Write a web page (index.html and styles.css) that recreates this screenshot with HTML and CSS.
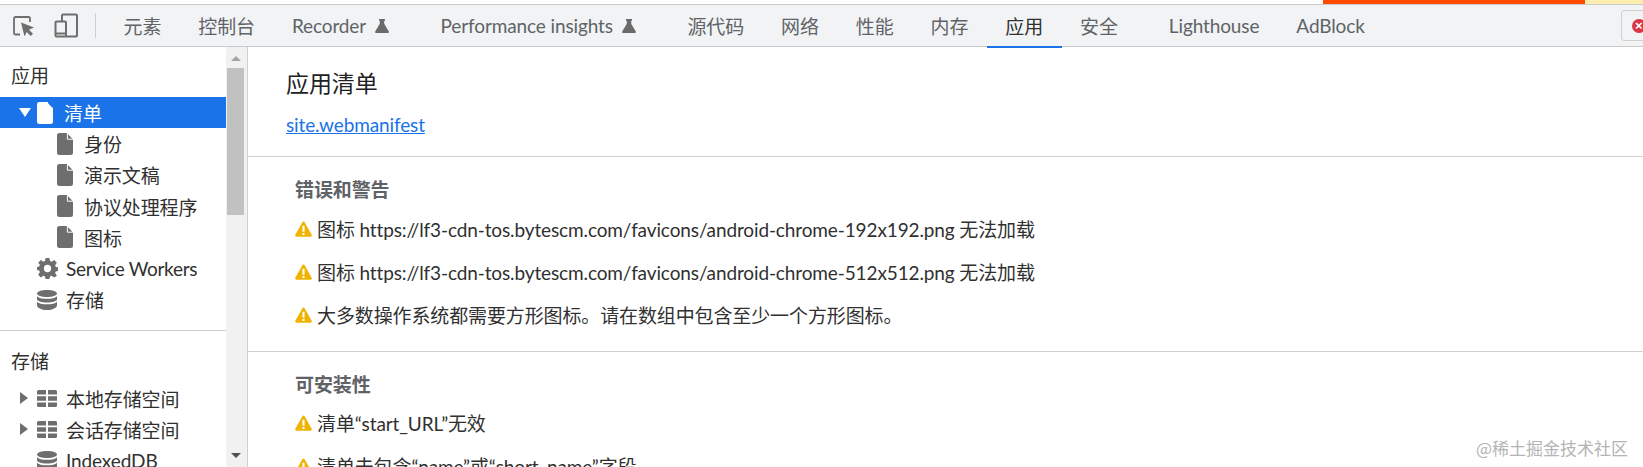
FILE: index.html
```html
<!DOCTYPE html>
<html lang="zh-CN">
<head>
<meta charset="utf-8">
<title>DevTools</title>
<link rel="stylesheet" href="styles.css">
</head>
<body>
<svg class="defs" width="0" height="0" aria-hidden="true">
  <symbol id="flask" viewBox="0 0 16 16"><path d="M5 1h6v1.800h-.8v3L14.800 13.600c.4.800 0 1.400-.8 1.400H2c-.8 0-1.200-.6-.8-1.400L5.800 5.800v-3H5z" fill="currentColor"/></symbol>
  <symbol id="doc" viewBox="0 0 16 22"><path d="M2.500 0H10l6 6.500V19.500a2.500 2.500 0 0 1-2.500 2.500h-11A2.500 2.500 0 0 1 0 19.500v-17A2.500 2.500 0 0 1 2.500 0z" fill="currentColor"/><path d="M10.400 0v6.200h5.600" fill="none" stroke="#fff" stroke-width="1"/></symbol>
  <symbol id="warn" viewBox="0 0 16 15"><path d="M8 .5c.5 0 .9.300 1.200.8l6.500 11.500c.5.900-.1 2-1.100 2H1.400c-1 0-1.600-1.100-1.100-2L6.800 1.300C7.100.8 7.500.5 8 .5z" fill="#f0b400"/><path d="M7 4.500h2v5.500H7zM7 11.200h2v2H7z" fill="#fff"/></symbol>
  <symbol id="db" viewBox="0 0 20 20"><g fill="currentColor"><path d="M0 3.500C0 1.600 4.500 0 10 0s10 1.600 10 3.500S15.500 7 10 7 0 5.400 0 3.500z"/><path d="M0 6c1 2 5.500 2.800 10 2.800S19 8 20 6v3.200C20 11 15.500 12.500 10 12.500S0 11 0 9.200z"/><path d="M0 11.500c1 2 5.500 2.800 10 2.800s9-.8 10-2.800v3.700C20 17.800 15.500 20 10 20S0 17.800 0 15.200z"/></g></symbol>
  <symbol id="grid" viewBox="0 0 20 17"><g fill="currentColor"><path d="M1.500 0H9v4.500H0V1.500A1.500 1.500 0 0 1 1.500 0zM11 0h7.500A1.500 1.500 0 0 1 20 1.500v3h-9zM0 6.200h9v4.600H0zM11 6.200h9v4.600h-9zM0 12.500h9V17H1.500A1.500 1.500 0 0 1 0 15.500zM11 12.500h9v3a1.500 1.500 0 0 1-1.500 1.500H11z"/></g></symbol>
  <symbol id="gear" viewBox="0 0 22 22"><path fill="currentColor" fill-rule="evenodd" d="M9 0h4l.6 3.200 1.700.7L18 2.100 20.800 5l-1.800 2.600.7 1.700L22 9.700v3.900l-2.300.5-.7 1.700 1.800 2.700L18 20.400l-2.700-1.800-1.700.7L13 22H9l-.6-2.700-1.700-.7L4 20.400 1.200 17.500 3 14.800l-.7-1.700L0 12.600V9.300l2.300-.4.7-1.700L1.200 5 4 2.100l2.700 1.800 1.700-.7zM11 7.200a3.800 3.800 0 1 0 0 7.600 3.800 3.800 0 0 0 0-7.600z"/></symbol>
</svg>

<div class="page-top">
  <div class="top-light"></div>
  <div class="top-orange"></div>
  <div class="top-yellow"></div>
</div>

<header class="toolbar">
  <div class="tool-icons">
    <svg class="ico-inspect" viewBox="0 0 21 20"><path d="M7 18.500H2.500a1.500 1.500 0 0 1-1.500-1.500V2.500A1.500 1.500 0 0 1 2.500 1h13A1.500 1.500 0 0 1 17 2.500V6" fill="none" stroke="#6e6e6e" stroke-width="1.800"/><path d="M8 6.500l13 5-5 2.200 4 4-2.300 2.300-4-4-2.200 4.500z" fill="#6e6e6e"/></svg>
    <svg class="ico-device" viewBox="0 0 24 25"><path d="M8 8V2.500a1 1 0 0 1 1-1h13a1 1 0 0 1 1 1v20a1 1 0 0 1-1 1H2.500a1 1 0 0 1-1-1v-13a1 1 0 0 1 1-1H11a1 1 0 0 1 1 1v14" fill="none" stroke="#6e6e6e" stroke-width="2"/><path d="M2 20.500h10" stroke="#6e6e6e" stroke-width="2"/></svg>
    <span class="tool-sep"></span>
  </div>
  <nav class="tabs">
    <a class="tab">元素</a>
    <a class="tab">控制台</a>
    <a class="tab">Recorder<svg class="flask"><use href="#flask"/></svg></a>
    <a class="tab">Performance insights<svg class="flask"><use href="#flask"/></svg></a>
    <a class="tab">源代码</a>
    <a class="tab">网络</a>
    <a class="tab">性能</a>
    <a class="tab">内存</a>
    <a class="tab active">应用</a>
    <a class="tab">安全</a>
    <a class="tab t-lh">Lighthouse</a>
    <a class="tab">AdBlock</a>
  </nav>
  <div class="err-badge"><span class="err-dot">×</span></div>
</header>

<div class="body">
  <aside class="sidebar">
    <div class="side-inner">
      <div class="side-head">应用</div>
      <div class="row selected l1"><span class="tri down"></span><svg class="doc"><use href="#doc"/></svg><span>清单</span></div>
      <div class="row l2"><svg class="doc"><use href="#doc"/></svg><span>身份</span></div>
      <div class="row l2"><svg class="doc"><use href="#doc"/></svg><span>演示文稿</span></div>
      <div class="row l2"><svg class="doc"><use href="#doc"/></svg><span>协议处理程序</span></div>
      <div class="row l2"><svg class="doc"><use href="#doc"/></svg><span>图标</span></div>
      <div class="row l1"><svg class="side-ico"><use href="#gear"/></svg><span class="latin-tight">Service Workers</span></div>
      <div class="row l1"><svg class="side-ico db"><use href="#db"/></svg><span>存储</span></div>
      <div class="side-div"></div>
      <div class="side-head">存储</div>
      <div class="row l1"><span class="tri right"></span><svg class="side-ico grid"><use href="#grid"/></svg><span>本地存储空间</span></div>
      <div class="row l1"><span class="tri right"></span><svg class="side-ico grid"><use href="#grid"/></svg><span>会话存储空间</span></div>
      <div class="row l1"><svg class="side-ico db"><use href="#db"/></svg><span>IndexedDB</span></div>
    </div>
    <div class="scrollbar">
      <span class="sb-up"></span>
      <span class="sb-thumb"></span>
      <span class="sb-down"></span>
    </div>
  </aside>
  <main class="content">
    <section class="head">
      <h1>应用清单</h1>
      <a class="link">site.webmanifest</a>
    </section>
    <section class="sec errors">
      <h2>错误和警告</h2>
      <p class="msg"><svg class="warn"><use href="#warn"/></svg>图标 https://lf3-cdn-tos.bytescm.com/favicons/android-chrome-192x192.png 无法加载</p>
      <p class="msg"><svg class="warn"><use href="#warn"/></svg>图标 https://lf3-cdn-tos.bytescm.com/favicons/android-chrome-512x512.png 无法加载</p>
      <p class="msg"><svg class="warn"><use href="#warn"/></svg>大多数操作系统都需要方形图标。请在数组中包含至少一个方形图标。</p>
    </section>
    <section class="sec install">
      <h2>可安装性</h2>
      <p class="msg"><svg class="warn"><use href="#warn"/></svg>清单“start_URL”无效</p>
      <p class="msg"><svg class="warn"><use href="#warn"/></svg>清单未包含“name”或“short_name”字段</p>
    </section>
  </main>
</div>
<div class="watermark">@稀土掘金技术社区</div>
</body>
</html>
```
FILE: styles.css
```css
* { box-sizing: border-box; }
html, body { margin: 0; padding: 0; height: 467px; overflow: hidden; background: #fff; }
body {
  width: 1643px;
  position: relative;
  font-family: Lato, "Noto Sans CJK SC", sans-serif;
  font-size: 19px;
  letter-spacing: -0.12px;
  color: #303030;
  display: flex;
  flex-direction: column;
}
.defs { position: absolute; }
.page-top { height: 4px; display: flex; background: #fff; flex: none; }
.top-light { width: 1323px; }
.top-orange { width: 262px; background: #ff4a00; }
.top-yellow { flex: 1; background: #fdeeb0; }

.toolbar {
  height: 43px;
  flex: none;
  display: flex;
  align-items: stretch;
  background: #f1f3f4;
  border-top: 1px solid #c9c9c9;
  border-bottom: 1px solid #c9c9c9;
  position: relative;
}
.tool-icons { width: 105px; display: flex; align-items: center; flex: none; padding-left: 13px; }
.ico-inspect { width: 21px; height: 20px; }
.ico-device { width: 24px; height: 25px; margin-left: 20px; }
.tool-sep { width: 1px; height: 25px; background: #d0d0d0; margin-left: 17px; }
.tabs { display: flex; flex: 1; align-items: stretch; }
.tab {
  display: flex;
  align-items: center;
  color: #5f6368;
  padding: 0 18.5px;
  white-space: nowrap;
  position: relative;
  flex: none;
}
.flask { width: 16px; height: 16px; margin: 0 13.5px 0 8px; color: #6a6a6a; }
.t-lh { margin-left: 14px; }
.tab.active { color: #303030; }
.tab.active::after {
  content: "";
  position: absolute;
  left: 0; right: 0; bottom: -2px;
  height: 2px;
  background: #1a73e8;
}
.err-badge {
  position: absolute;
  left: 1621px;
  top: 5px;
  width: 30px;
  height: 31px;
  border: 1px solid #d0d0d0;
  border-radius: 3px;
  padding: 8px 0 0 10px;
}
.err-dot {
  display: block;
  width: 14px;
  height: 14px;
  border-radius: 50%;
  background: #dc3545;
  color: #fff;
  font: bold 13px/13px "Liberation Sans", sans-serif;
  padding-left: 3px;
}

.body { flex: 1; display: flex; min-height: 0; }
.sidebar {
  width: 248px;
  flex: none;
  display: flex;
  border-right: 1px solid #cfcfcf;
  overflow: hidden;
}
.side-inner { width: 226px; flex: none; padding-top: 13px; }
.side-head { height: 37px; padding-left: 11px; line-height: 32px; color: #303030; }
.row {
  height: 31.25px;
  display: flex;
  align-items: center;
  white-space: nowrap;
  color: #303030;
  position: relative;
}
.row.l1 { padding-left: 37px; }
.row.l2 { padding-left: 57px; }
.row .doc { width: 16px; height: 22px; color: #6e6e6e; margin-right: 11px; flex: none; }
.side-ico { width: 21px; height: 21px; color: #6e6e6e; margin-right: 8px; flex: none; }
.side-ico.db { width: 20px; height: 20px; margin-right: 9px; }
.side-ico.grid { width: 20px; height: 17px; margin-right: 9px; }
.latin-tight { letter-spacing: -0.3px; }
.row.selected { background: #1a73e8; color: #fff; height: 31px; }
.row.selected .doc { color: #fff; }
.tri { position: absolute; left: 19px; }
.tri.down { width: 0; height: 0; border-left: 6px solid transparent; border-right: 6px solid transparent; border-top: 9px solid #fff; }
.tri.right { left: 20px; width: 0; height: 0; border-top: 6px solid transparent; border-bottom: 6px solid transparent; border-left: 8px solid #6e6e6e; }
.side-div { height: 1px; background: #cfcfcf; margin-top: 14px; margin-bottom: 15px; }

.scrollbar { width: 21px; background: #f1f1f1; position: relative; flex: none; }
.sb-up, .sb-down { position: absolute; left: 5px; width: 0; height: 0; border-left: 5px solid transparent; border-right: 5px solid transparent; }
.sb-up { top: 9px; border-bottom: 5px solid #a3a3a3; }
.sb-down { top: 406px; border-top: 5px solid #505050; }
.sb-thumb { position: absolute; left: 1px; top: 21px; width: 17px; height: 147px; background: #c1c1c1; }

.content { flex: 1; min-width: 0; }
.head { padding: 16px 38px 0; height: 109px; }
h1 { margin: 0; font-size: 23px; font-weight: 400; line-height: 40px; color: #202124; }
.link { display: block; margin-top: 3px; color: #1a73e8; text-decoration: underline; line-height: 38px; }
.sec { border-top: 1px solid #cfcfcf; padding-left: 47px; }
.sec h2 { margin: 0; font-size: 19px; font-weight: 700; color: #5f6368; line-height: 32px; padding-top: 17px; height: 58px; }
.errors { height: 195px; }
.install h2 { height: 57px; }
.msg { margin: 0; height: 43px; line-height: 30px; display: flex; align-items: flex-start; white-space: nowrap; color: #303030; }
.warn { width: 17px; height: 16px; margin-right: 5px; margin-top: 6px; flex: none; }
.watermark {
  position: absolute;
  left: 1476px;
  top: 435px;
  font-size: 17px;
  letter-spacing: 0;
  color: #b4b4b4;
  white-space: nowrap;
  font-family: "Noto Sans CJK SC", sans-serif;
}
```
